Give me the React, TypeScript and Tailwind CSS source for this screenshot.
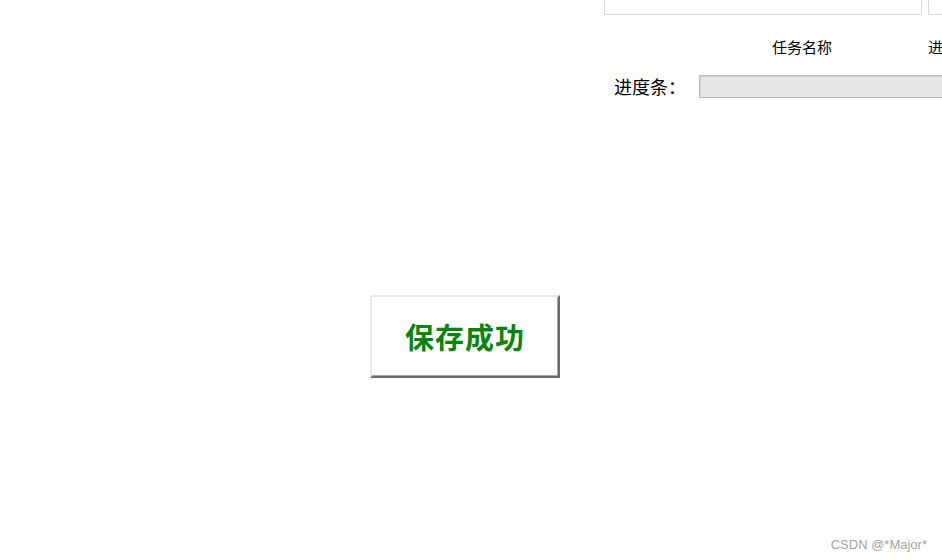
export default function App() {
  return (
    <div
      className="relative w-[942px] h-[560px] overflow-hidden bg-white text-black"
      style={{ fontFamily: '"Noto Sans CJK SC", "Liberation Sans", sans-serif' }}
    >
      {/* right panel (cut off at the window edge) */}
      <div className="flex flex-col pl-[604px]">
        <div className="flex gap-[6px] h-[15px]">
          <div className="w-[318px] shrink-0 h-full border-x border-b border-[#dadada]" />
          <div className="w-[40px] shrink-0 h-full border-l border-b border-[#dadada]" />
        </div>

        <div className="flex mt-[24px] h-[16px] leading-[16px] text-[15px] whitespace-nowrap">
          <span className="ml-[168px] w-[60px] shrink-0">任务名称</span>
          <span className="ml-[96px] shrink-0">进度</span>
        </div>

        <div className="flex items-center mt-[20px] h-[23px] whitespace-nowrap">
          <span className="ml-[10px] w-[85px] shrink-0 text-[18px] leading-[23px]">进度条：</span>
          <div className="w-[300px] shrink-0 h-[23px] border border-[#bcbcbc] bg-[#e6e6e6] shadow-[inset_1px_1px_0_#d4d4d4]" />
        </div>
      </div>

      {/* message box */}
      <div className="ml-[370px] mt-[197px] w-[190px] h-[83px] flex items-center justify-center bg-white border-2 border-t-[#e8e8e8] border-l-[#e8e8e8] border-r-[#6b6b6b] border-b-[#6b6b6b] shadow-[inset_-1px_-1px_0_#a8a8a8]">
        <span className="text-[29px] leading-none font-semibold text-[#0a840a] tracking-[1px]">保存成功</span>
      </div>

      <div
        className="absolute right-[15px] bottom-[9px] text-[13px] leading-none text-[#a3a3a3]"
        style={{ fontFamily: '"Liberation Sans", Arial, sans-serif' }}
      >
        CSDN @*Major*
      </div>
    </div>
  );
}
